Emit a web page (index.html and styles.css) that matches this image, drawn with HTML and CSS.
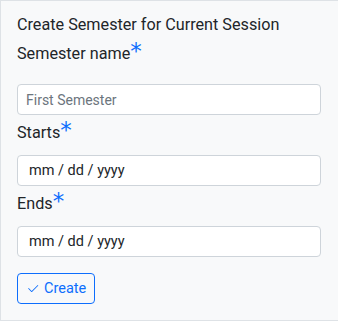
FILE: index.html
```html
<!DOCTYPE html>
<html lang="en">
<head>
<meta charset="utf-8">
<title>Create Semester</title>
<link rel="stylesheet" href="styles.css">
</head>
<body>
<div class="card">
  <p class="card-title">Create Semester for Current Session</p>
  <form class="form">
    <div class="field">
      <label class="label label-first" for="sem-name">Semester name<span class="req">*</span></label>
      <input class="control" id="sem-name" type="text" placeholder="First Semester">
    </div>
    <div class="field">
      <label class="label" for="sem-start">Starts<span class="req">*</span></label>
      <input class="control control-date" id="sem-start" type="text" inputmode="numeric" placeholder="mm / dd / yyyy">
    </div>
    <div class="field">
      <label class="label" for="sem-end">Ends<span class="req">*</span></label>
      <input class="control control-date" id="sem-end" type="text" inputmode="numeric" placeholder="mm / dd / yyyy">
    </div>
    <button class="btn" type="button"><svg class="btn-icon" viewBox="0 0 16 16" width="14" height="14" aria-hidden="true"><path fill="currentColor" d="M13.854 3.646a.5.5 0 0 1 0 .708l-7 7a.5.5 0 0 1-.708 0l-3.5-3.5a.5.5 0 1 1 .708-.708L6.5 10.293l6.646-6.647a.5.5 0 0 1 .708 0z"/></svg> Create</button>
  </form>
</div>
</body>
</html>
```
FILE: styles.css
```css
html, body {
  margin: 0;
  padding: 0;
  background: #ffffff;
}

body {
  font-family: Roboto, "Noto Sans", sans-serif;
  color: #212529;
  font-size: 16px;
  line-height: 24px;
}

.card {
  box-sizing: border-box;
  height: 321px;
  background: #f8f9fa;
  border: 1px solid #dee2e6;
  border-right: 0;
  padding: 12px 17px 0 16px;
}

.card-title {
  margin: 0 0 5px;
  font-size: 16.2px;
  line-height: 24px;
}

.form {
  display: flex;
  flex-direction: column;
  align-items: flex-start;
}

.field {
  display: flex;
  flex-direction: column;
  align-self: stretch;
  margin-bottom: 6px;
}

.label {
  display: block;
  margin-bottom: 10px;
  font-size: 16.2px;
  line-height: 24px;
}

.label-first {
  margin-bottom: 18px;
}

.req {
  font-family: "DejaVu Sans", sans-serif;
  font-size: 23px;
  line-height: 0;
  color: #0d6efd;
  vertical-align: baseline;
}

.control {
  box-sizing: border-box;
  display: block;
  width: 100%;
  height: 31px;
  margin: 0;
  padding: 4px 8px;
  font-family: inherit;
  font-size: 14px;
  line-height: 21px;
  color: #212529;
  background: #ffffff;
  border: 1px solid #ced4da;
  border-radius: 4px;
}

.control::placeholder {
  color: #6c757d;
  opacity: 1;
}

.control-date {
  padding-left: 11px;
  font-size: 14.5px;
}

.control-date::placeholder {
  color: #212529;
}

.btn {
  display: inline-flex;
  align-items: center;
  gap: 4px;
  box-sizing: border-box;
  height: 31px;
  margin-top: 10px;
  padding: 4px 8px;
  font-family: inherit;
  font-size: 14.5px;
  line-height: 21px;
  color: #0d6efd;
  background: transparent;
  border: 1px solid #0d6efd;
  border-radius: 4px;
}

.btn-icon {
  display: block;
  flex: none;
}
```
